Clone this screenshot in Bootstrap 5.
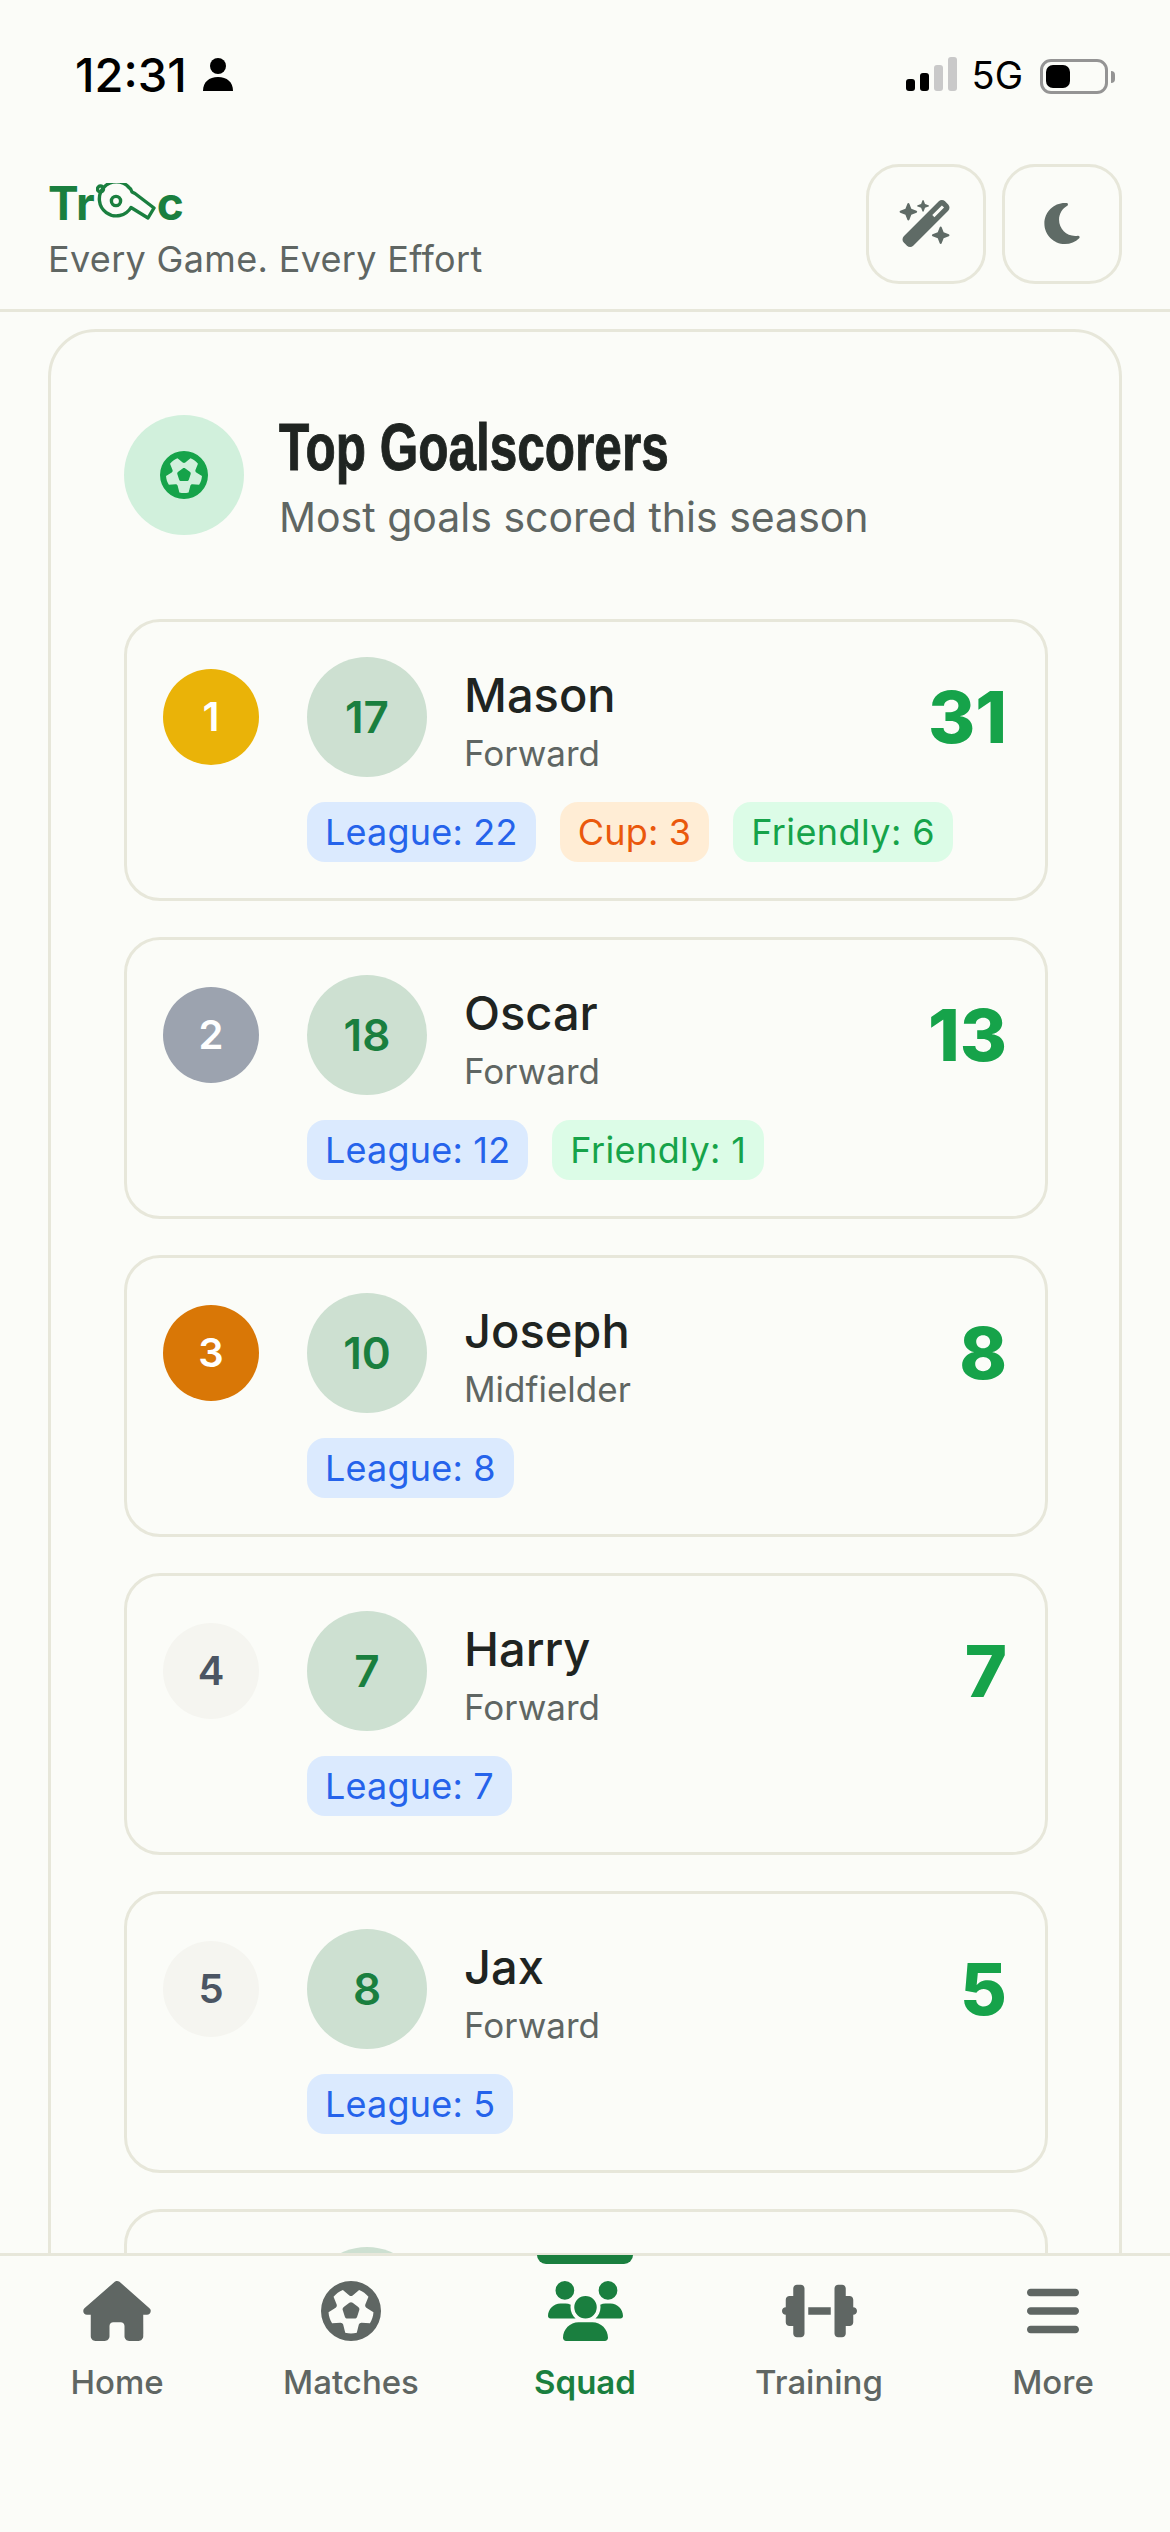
<!DOCTYPE html>
<html lang="en">
<head>
  <meta charset="UTF-8">
  <meta name="viewport" content="width=device-width, initial-scale=1">
  <title>Top Goalscorers</title>
  <link href="https://cdn.jsdelivr.net/npm/bootstrap@5.3.3/dist/css/bootstrap.min.css" rel="stylesheet">
  <style>
    body { background: #fbfcf8; font-family: Inter, "Liberation Sans", sans-serif; color: #1f2421; height: 2532px; overflow: hidden; }
    .ic { fill: currentColor; display: block; }

    .status-row { height: 138px; padding: 0 55px 44px 75px; color: #000; }
    .status-left { margin-bottom: -4px; }
    .status-time { font-size: 47px; font-weight: 500; line-height: 1; }
    .status-net { font-size: 38px; line-height: 1; margin: 0 17px 0 15px; }
    .sig-wrap { gap: 5px; margin-bottom: 3px; }
    .sig-bar { width: 9px; border-radius: 3px; background: #000; }
    .sig-off { background: #c9c9c9; }
    .batt { width: 68px; height: 35px; border: 3px solid #949494; border-radius: 11px; padding: 3px; }
    .batt-fill { width: 24px; height: 100%; background: #000; border-radius: 7px; }
    .batt-nub { width: 4px; height: 12px; background: #949494; border-radius: 0 4px 4px 0; margin-left: 3px; }

    .top-head { height: 174px; padding: 0 48px; border-bottom: 3px solid #e7e7da; }
    .brand-block { padding-top: 9px; }
    .logo-txt { font-size: 46px; font-weight: 700; line-height: 48px; color: #1a7f3f; }
    .logo-whistle { width: 60px; height: 37px; margin: -3px 1px 0 1px; fill: none; stroke: #1a7f3f; stroke-width: 3.4; stroke-linejoin: round; }
    .tagline { font-size: 36px; line-height: 1; color: #5f6663; margin-top: 14px; letter-spacing: .33px; }
    .head-btn { width: 120px; height: 120px; padding: 0; border: 3px solid #e7e7da; border-radius: 33px; color: #5f6b66; background: transparent; }

    .page-wrap { padding: 17px 48px 0; }
    .score-panel { background: transparent; border: 3px solid #e7e7da; border-radius: 48px; padding: 83px 71px 0 73px; }
    .panel-head { gap: 35px; height: 120px; }
    .panel-ico { width: 120px; height: 120px; background: #d1f0dc; color: #16a34a; }
    .panel-title { font-family: "Liberation Sans", sans-serif; font-weight: 700; font-size: 66px; line-height: 60px; color: #1f2421; margin: 4px 0 0; transform: scaleX(.75); transform-origin: left center; -webkit-text-stroke: 1px #1f2421; white-space: nowrap; }
    .panel-sub { font-size: 41px; line-height: 40px; color: #5f6663; margin-top: 20px; }
    .scorers { margin-top: 84px; gap: 36px; }

    .score-row { border: 3px solid #e7e7da; border-radius: 36px; padding: 35px 36px 36px; gap: 48px; background: transparent; }
    .rank-dot { width: 96px; height: 96px; margin-top: 12px; font-size: 40px; font-weight: 600; color: #fff; flex-shrink: 0; }
    .rank-1 { background: #eab308; }
    .rank-2 { background: #9ca3af; }
    .rank-3 { background: #d97706; }
    .rank-4 { background: #f5f5f0; color: #4b5563; }
    .avatar-dot { width: 120px; height: 120px; background: #cde0d1; color: #1a7f3f; font-size: 44px; font-weight: 600; flex-shrink: 0; }
    .who-box { margin-left: 37px; }
    .who-name { font-size: 47px; font-weight: 500; line-height: 1; margin-top: 7px; }
    .who-role { font-size: 35px; line-height: 1; color: #5f6663; margin-top: 18px; }
    .goals { font-size: 72px; font-weight: 800; line-height: 1; color: #16a34a; margin-right: 2px; }
    .tag-line { margin-top: 25px; }
    .kind-tag { font-size: 36px; font-weight: 400; line-height: 60px; height: 60px; padding: 0 18px; border-radius: 18px; letter-spacing: .2px; }
    .tag-league { background: #dbeafe; color: #2563eb; }
    .tag-cup { background: #ffedd5; color: #ea580c; }
    .tag-friendly { background: #dcfce7; color: #16a34a; letter-spacing: .4px; }

    .tab-bar { height: 279px; background: #fbfcf8; border-top: 3px solid #e7e7da; align-items: flex-start; }
    .tab-item { padding: 25px 0 0; color: #5f6663; font-size: 33px; font-weight: 500; line-height: 1; }
    .tab-item:hover { color: #5f6663; }
    .tab-on, .tab-on:hover { color: #1a7f3f; font-weight: 600; }
    .tab-on::before { content: ""; position: absolute; top: -1px; left: 69px; width: 96px; height: 9px; background: #1a7f3f; border-radius: 0 0 9px 9px; }
    .tab-ico { height: 60px; margin: 0 auto 25px; }
  </style>
</head>
<body>

  <div class="status-row d-flex justify-content-between align-items-end">
    <div class="d-flex align-items-center gap-3 status-left">
      <span class="status-time">12:31</span>
      <svg class="ic" width="30" height="33" viewBox="0 0 30 33"><circle cx="15" cy="8" r="8"/><path d="M0 33c0-9 6-14 15-14s15 5 15 14z"/></svg>
    </div>
    <div class="d-flex align-items-end">
      <div class="d-flex align-items-end sig-wrap">
        <div class="sig-bar" style="height:12px"></div>
        <div class="sig-bar" style="height:18px"></div>
        <div class="sig-bar sig-off" style="height:26px"></div>
        <div class="sig-bar sig-off" style="height:34px"></div>
      </div>
      <span class="status-net">5G</span>
      <div class="d-flex align-items-center">
        <div class="batt"><div class="batt-fill"></div></div>
        <div class="batt-nub"></div>
      </div>
    </div>
  </div>

  <header class="top-head d-flex justify-content-between align-items-center">
    <div class="brand-block">
      <div class="logo-txt d-flex align-items-center">Tr<svg class="logo-whistle" viewBox="0 0 60 37"><path d="M33 4.5Q35.5 6 36 9L39 10.5 58 25 52 35 35 24.5A17 17 0 1 1 33 4.5z"/><circle cx="20" cy="18" r="4.6"/><circle cx="4.5" cy="6" r="3"/></svg>c</div>
      <div class="tagline">Every Game. Every Effort</div>
    </div>
    <div class="d-flex gap-3">
      <button class="btn head-btn d-flex align-items-center justify-content-center" aria-label="Magic">
        <svg class="ic" width="54" height="47" viewBox="0 0 576 512"><path d="M234.7 42.7L197 56.8c-3 1.1-5 4-5 7.2s2 6.1 5 7.2l37.7 14.1L248.8 123c1.1 3 4 5 7.2 5s6.1-2 7.2-5l14.1-37.7L315 71.2c3-1.1 5-4 5-7.2s-2-6.1-5-7.2L277.3 42.7 263.2 5c-1.1-3-4-5-7.2-5s-6.1 2-7.2 5L234.7 42.7zM46.1 395.4c-18.7 18.7-18.7 49.1 0 67.9l34.6 34.6c18.7 18.7 49.1 18.7 67.9 0L529.9 116.5c18.7-18.7 18.7-49.1 0-67.9L495.3 14.1c-18.7-18.7-49.1-18.7-67.9 0L46.1 395.4zM484.6 82.6l-105 105-23.3-23.3 105-105 23.3 23.3zM7.5 117.2C3 118.9 0 123.2 0 128s3 9.1 7.5 10.8L64 160l21.2 56.5c1.7 4.5 6 7.5 10.8 7.5s9.1-3 10.8-7.5L128 160l56.5-21.2c4.5-1.7 7.5-6 7.5-10.8s-3-9.1-7.5-10.8L128 96 106.8 39.5C105.1 35 100.8 32 96 32s-9.1 3-10.8 7.5L64 96 7.5 117.2zm352 256c-4.5 1.7-7.5 6-7.5 10.8s3 9.1 7.5 10.8L416 416l21.2 56.5c1.7 4.5 6 7.5 10.8 7.5s9.1-3 10.8-7.5L480 416l56.5-21.2c4.5-1.7 7.5-6 7.5-10.8s-3-9.1-7.5-10.8L480 352l-21.2-56.5c-1.7-4.5-6-7.5-10.8-7.5s-9.1 3-10.8 7.5L416 352l-56.5 21.2z"/></svg>
      </button>
      <button class="btn head-btn d-flex align-items-center justify-content-center" aria-label="Dark mode">
        <svg class="ic" width="36" height="47" viewBox="0 0 384 512"><path d="M223.5 32C100 32 0 132.3 0 256S100 480 223.5 480c60.6 0 115.5-24.2 155.8-63.4c5-4.9 6.3-12.5 3.1-18.7s-10.1-9.7-17-8.5c-9.8 1.7-19.8 2.6-30.1 2.6c-96.9 0-175.5-78.8-175.5-176c0-65.8 36-123.1 89.3-153.3c6.1-3.5 9.2-10.5 7.7-17.3s-7.3-11.9-14.3-12.5c-6.3-.5-12.6-.8-19-.8z"/></svg>
      </button>
    </div>
  </header>

  <div class="page-wrap">
    <div class="card score-panel">
      <div class="d-flex align-items-center panel-head">
        <div class="panel-ico rounded-circle d-flex align-items-center justify-content-center flex-shrink-0">
          <svg class="ic" width="48" height="48" viewBox="0 0 512 512"><path d="M417.3 360.1l-71.6-4.8c-5.2-.3-10.3 1.1-14.5 4.2s-7.2 7.4-8.4 12.5l-17.6 69.6C289.5 445.8 273 448 256 448s-33.5-2.2-49.2-6.4L189.2 372c-1.3-5-4.3-9.4-8.4-12.5s-9.3-4.5-14.5-4.2l-71.6 4.8c-17.6-27.2-28.5-59.2-30.4-93.6L125 228.3c4.4-2.8 7.6-7 9.2-11.9s1.4-10.2-.5-15l-26.7-66.6C128 109.2 155.3 89 186.7 76.9l55.2 46c4 3.3 9 5.1 14.1 5.1s10.2-1.8 14.1-5.1l55.2-46c31.3 12.1 58.7 32.3 79.6 57.9l-26.7 66.6c-1.9 4.8-2.1 10.1-.5 15s4.9 9.1 9.2 11.9l60.7 38.2c-1.9 34.4-12.8 66.4-30.4 93.6zM256 512A256 256 0 1 0 256 0a256 256 0 1 0 0 512zm14.1-325.7c-8.4-6.1-19.8-6.1-28.2 0L194 221c-8.4 6.1-11.9 16.9-8.7 26.8l18.3 56.3c3.2 9.9 12.4 16.6 22.8 16.6h59.2c10.4 0 19.6-6.7 22.8-16.6l18.3-56.3c3.2-9.9-.3-20.7-8.7-26.8l-47.9-34.8z"/></svg>
        </div>
        <div>
          <h1 class="panel-title">Top Goalscorers</h1>
          <div class="panel-sub">Most goals scored this season</div>
        </div>
      </div>
      <div class="scorers d-flex flex-column" id="listaGoleadores"></div>
    </div>
  </div>

  <nav class="nav nav-justified fixed-bottom tab-bar">
    <a class="nav-link tab-item position-relative" href="#">
      <svg class="ic tab-ico" width="68" viewBox="0 0 576 512"><path d="M575.8 255.5c0 18-15 32.1-32 32.1h-32l.7 160.2c0 2.7-.2 5.4-.5 8.1V472c0 22.1-17.9 40-40 40H456c-1.1 0-2.2 0-3.3-.1c-1.4 .1-2.8 .1-4.2 .1H416 392c-22.1 0-40-17.9-40-40V448 384c0-17.7-14.3-32-32-32H256c-17.7 0-32 14.3-32 32v64 24c0 22.1-17.9 40-40 40H160 128.1c-1.5 0-3-.1-4.5-.2c-1.2 .1-2.4 .2-3.6 .2H104c-22.1 0-40-17.9-40-40V360c0-.9 0-1.9 .1-2.8V287.6H32c-18 0-32-14-32-32.1c0-9 3-17 10-24L266.4 8c7-7 15-8 22-8s15 2 21 7L564.8 231.5c8 7 12 15 11 24z"/></svg>
      Home
    </a>
    <a class="nav-link tab-item position-relative" href="#">
      <svg class="ic tab-ico" width="60" viewBox="0 0 512 512"><path d="M417.3 360.1l-71.6-4.8c-5.2-.3-10.3 1.1-14.5 4.2s-7.2 7.4-8.4 12.5l-17.6 69.6C289.5 445.8 273 448 256 448s-33.5-2.2-49.2-6.4L189.2 372c-1.3-5-4.3-9.4-8.4-12.5s-9.3-4.5-14.5-4.2l-71.6 4.8c-17.6-27.2-28.5-59.2-30.4-93.6L125 228.3c4.4-2.8 7.6-7 9.2-11.9s1.4-10.2-.5-15l-26.7-66.6C128 109.2 155.3 89 186.7 76.9l55.2 46c4 3.3 9 5.1 14.1 5.1s10.2-1.8 14.1-5.1l55.2-46c31.3 12.1 58.7 32.3 79.6 57.9l-26.7 66.6c-1.9 4.8-2.1 10.1-.5 15s4.9 9.1 9.2 11.9l60.7 38.2c-1.9 34.4-12.8 66.4-30.4 93.6zM256 512A256 256 0 1 0 256 0a256 256 0 1 0 0 512zm14.1-325.7c-8.4-6.1-19.8-6.1-28.2 0L194 221c-8.4 6.1-11.9 16.9-8.7 26.8l18.3 56.3c3.2 9.9 12.4 16.6 22.8 16.6h59.2c10.4 0 19.6-6.7 22.8-16.6l18.3-56.3c3.2-9.9-.3-20.7-8.7-26.8l-47.9-34.8z"/></svg>
      Matches
    </a>
    <a class="nav-link tab-item tab-on position-relative" href="#">
      <svg class="ic tab-ico" width="75" viewBox="0 0 640 512"><path d="M144 0a80 80 0 1 1 0 160A80 80 0 1 1 144 0zM512 0a80 80 0 1 1 0 160A80 80 0 1 1 512 0zM0 298.7C0 239.8 47.8 192 106.7 192h42.7c15.9 0 31 3.5 44.6 9.7c-1.3 7.2-1.9 14.7-1.9 22.3c0 38.2 16.8 72.5 43.3 96c-.2 0-.4 0-.7 0H21.3C9.6 320 0 310.4 0 298.7zM405.3 320c-.2 0-.4 0-.7 0c26.6-23.5 43.3-57.8 43.3-96c0-7.6-.7-15-1.9-22.3c13.6-6.3 28.7-9.7 44.6-9.7h42.7C592.2 192 640 239.8 640 298.7c0 11.8-9.6 21.3-21.3 21.3H405.3zM224 224a96 96 0 1 1 192 0 96 96 0 1 1 -192 0zM128 485.3C128 411.7 187.7 352 261.3 352H378.7C452.3 352 512 411.7 512 485.3c0 14.7-11.9 26.7-26.7 26.7H154.7c-14.7 0-26.7-11.9-26.7-26.7z"/></svg>
      Squad
    </a>
    <a class="nav-link tab-item position-relative" href="#">
      <svg class="ic tab-ico" width="75" viewBox="0 0 640 512"><path d="M96 64c0-17.7 14.3-32 32-32h32c17.7 0 32 14.3 32 32V224v64V448c0 17.7-14.3 32-32 32H128c-17.7 0-32-14.3-32-32V384H64c-17.7 0-32-14.3-32-32V288c-17.7 0-32-14.3-32-32s14.3-32 32-32V160c0-17.7 14.3-32 32-32H96V64zm448 0v64h32c17.7 0 32 14.3 32 32v64c17.7 0 32 14.3 32 32s-14.3 32-32 32v64c0 17.7-14.3 32-32 32H544v64c0 17.7-14.3 32-32 32H480c-17.7 0-32-14.3-32-32V288 224 64c0-17.7 14.3-32 32-32h32c17.7 0 32 14.3 32 32zM416 224v64H224V224H416z"/></svg>
      Training
    </a>
    <a class="nav-link tab-item position-relative" href="#">
      <svg class="ic tab-ico" width="52" viewBox="0 0 448 512"><path d="M0 96C0 78.3 14.3 64 32 64H416c17.7 0 32 14.3 32 32s-14.3 32-32 32H32C14.3 128 0 113.7 0 96zM0 256c0-17.7 14.3-32 32-32H416c17.7 0 32 14.3 32 32s-14.3 32-32 32H32c-17.7 0-32-14.3-32-32zM448 416c0 17.7-14.3 32-32 32H32c-17.7 0-32-14.3-32-32s14.3-32 32-32H416c17.7 0 32 14.3 32 32z"/></svg>
      More
    </a>
  </nav>

  <script src="https://cdn.jsdelivr.net/npm/bootstrap@5.3.3/dist/js/bootstrap.bundle.min.js"></script>
  <script>
    const goleadores = [
      { numero: 17, nome: "Mason", posicao: "Forward", gols: 31, liga: 22, copa: 3, amistoso: 6 },
      { numero: 18, nome: "Oscar", posicao: "Forward", gols: 13, liga: 12, amistoso: 1 },
      { numero: 10, nome: "Joseph", posicao: "Midfielder", gols: 8, liga: 8 },
      { numero: 7, nome: "Harry", posicao: "Forward", gols: 7, liga: 7 },
      { numero: 8, nome: "Jax", posicao: "Forward", gols: 5, liga: 5 }
    ];

    function etiqueta(classe, texto, valor) {
      return valor ? `<span class="badge kind-tag ${classe}">${texto}: ${valor}</span>` : "";
    }

    const lista = document.getElementById("listaGoleadores");
    lista.innerHTML = goleadores.map((g, i) => `
      <div class="score-row d-flex">
        <div class="rank-dot rank-${Math.min(i + 1, 4)} rounded-circle d-flex align-items-center justify-content-center">${i + 1}</div>
        <div class="flex-grow-1">
          <div class="d-flex align-items-center">
            <div class="avatar-dot rounded-circle d-flex align-items-center justify-content-center">${g.numero}</div>
            <div class="flex-grow-1 who-box">
              <div class="who-name">${g.nome}</div>
              <div class="who-role">${g.posicao}</div>
            </div>
            <div class="goals">${g.gols}</div>
          </div>
          <div class="d-flex gap-4 tag-line">
            ${etiqueta("tag-league", "League", g.liga)}
            ${etiqueta("tag-cup", "Cup", g.copa)}
            ${etiqueta("tag-friendly", "Friendly", g.amistoso)}
          </div>
        </div>
      </div>`).join("") + `
      <div class="score-row d-flex">
        <div class="rank-dot rank-4 rounded-circle"></div>
        <div class="avatar-dot rounded-circle"></div>
      </div>`;
  </script>

</body>
</html>
